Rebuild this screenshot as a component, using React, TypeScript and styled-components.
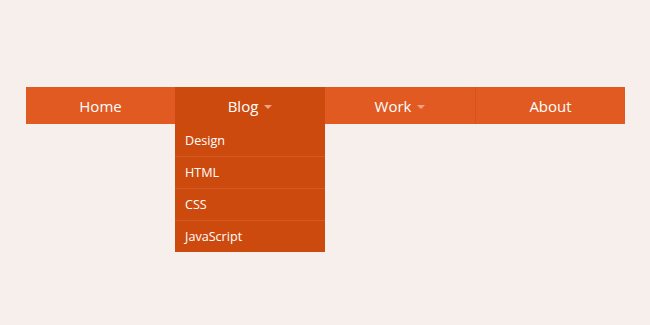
import styled, { createGlobalStyle } from 'styled-components'

const GlobalStyle = createGlobalStyle`
  body {
    margin: 0;
    background: #f7efec;
    font-family: 'Open Sans', 'Liberation Sans', sans-serif;
  }
`

const Page = styled.div`
  width: 650px;
  height: 325px;
  padding-top: 87px;
  box-sizing: border-box;
`

const NavBar = styled.ul`
  display: grid;
  grid-template-columns: 149px 150px 150px 150px;
  width: 599px;
  height: 37px;
  margin: 0 0 0 26px;
  padding: 0;
  list-style: none;
  background: #e05a22;
`

const NavItem = styled.li<{ $active?: boolean; $divider?: boolean }>`
  position: relative;
  box-sizing: border-box;
  display: flex;
  align-items: center;
  justify-content: center;
  gap: 6px;
  color: #fff;
  font-size: 15px;
  padding-top: 1px;
  background: ${(p) => (p.$active ? '#cd4a0e' : 'transparent')};
  border-left: ${(p) => (p.$divider ? '1px solid #d4521b' : 'none')};
`

const Caret = styled.span`
  display: inline-block;
  width: 0;
  height: 0;
  margin-top: 2px;
  border-left: 4px solid transparent;
  border-right: 4px solid transparent;
  border-top: 4px solid #f2a384;
`

const Dropdown = styled.ul`
  position: absolute;
  top: 37px;
  left: 0;
  width: 100%;
  margin: 0;
  padding: 0;
  list-style: none;
  background: #cd4a0e;
`

const DropItem = styled.li<{ $first?: boolean }>`
  height: 32px;
  box-sizing: border-box;
  padding-left: 10px;
  display: flex;
  align-items: center;
  color: #fff;
  font-size: 12.6px;
  border-top: ${(p) => (p.$first ? 'none' : '1px solid #d65823')};
`

const items = ['Design', 'HTML', 'CSS', 'JavaScript']

function App() {
  return (
    <Page>
      <GlobalStyle />
      <NavBar>
        <NavItem>Home</NavItem>
        <NavItem $active>
          Blog <Caret />
          <Dropdown>
            {items.map((it, i) => (
              <DropItem key={it} $first={i === 0}>
                {it}
              </DropItem>
            ))}
          </Dropdown>
        </NavItem>
        <NavItem>
          Work <Caret />
        </NavItem>
        <NavItem $divider>About</NavItem>
      </NavBar>
    </Page>
  )
}

export default App
